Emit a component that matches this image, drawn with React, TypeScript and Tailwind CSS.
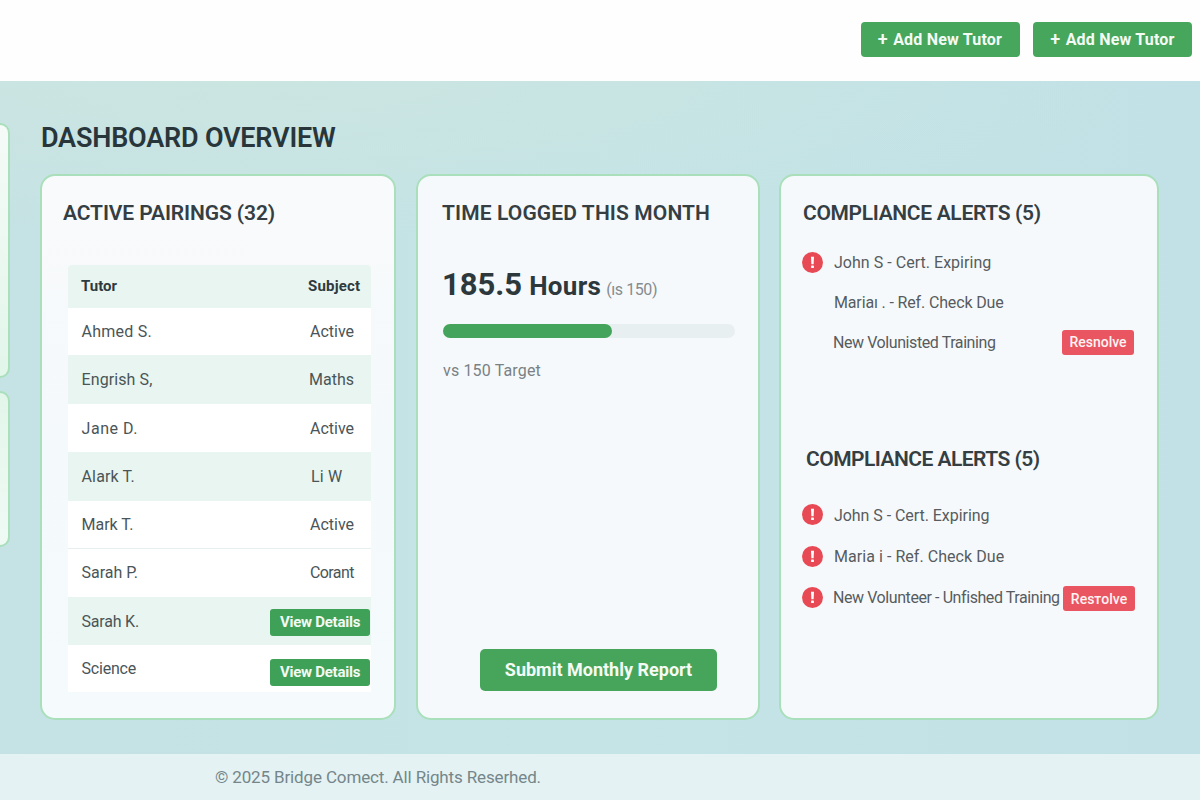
import React from 'react';
import { clsx } from 'clsx';

interface Pairing {
  tutor: string;
  subject?: string;
  rowClass: string;
  tutorClass?: string;
  subjectClass?: string;
  actionClass?: string;
}

interface Alert {
  message: string;
  flagged: boolean;
  rowClass: string;
  textClass: string;
  action?: string;
  actionClass?: string;
}

const pairings: Pairing[] = [
  { tutor: 'Ahmed S.', subject: 'Active', rowClass: 'h-[47px] bg-white', tutorClass: 'tracking-[0.25px]' },
  {
    tutor: 'Engrish S,',
    subject: 'Maths',
    rowClass: 'h-[49px] bg-[#e9f5f0]',
    tutorClass: 'tracking-[0.1px]',
    subjectClass: '-ml-px',
  },
  { tutor: 'Jane D.', subject: 'Active', rowClass: 'h-[48px] bg-white pt-px', tutorClass: 'tracking-[0.55px]' },
  {
    tutor: 'Alark T.',
    subject: 'Li W',
    rowClass: 'h-[49px] bg-[#e9f5f0]',
    tutorClass: 'tracking-[0.15px]',
    subjectClass: 'ml-px tracking-[0.2px]',
  },
  { tutor: 'Mark T.', subject: 'Active', rowClass: 'h-[48px] border-b border-[#e6eef0] bg-white' },
  { tutor: 'Sarah P.', subject: 'Corant', rowClass: 'h-[48px] bg-white', subjectClass: 'tracking-[-0.6px]' },
  { tutor: 'Sarah K.', rowClass: 'h-[48px] bg-[#e9f5f0] pt-px', tutorClass: 'tracking-[-0.2px]', actionClass: 'mt-[2px]' },
  { tutor: 'Science', rowClass: 'h-[47px] bg-white pt-px', tutorClass: 'tracking-[-0.2px]', actionClass: 'mt-[6px]' },
];

const recentAlerts: Alert[] = [
  { message: 'John S - Cert. Expiring', flagged: true, rowClass: 'h-[40px]', textClass: 'tracking-[0.03px]' },
  { message: 'Mariaı . - Ref. Check Due', flagged: false, rowClass: 'h-[40px]', textClass: 'tracking-[-0.15px]' },
  {
    message: 'New Volunisted Training',
    flagged: false,
    rowClass: 'h-[40px]',
    textClass: '-ml-px tracking-[-0.42px]',
    action: 'Resnolve',
    actionClass: 'mr-px mb-[2px]',
  },
];

const openAlerts: Alert[] = [
  { message: 'John S - Cert. Expiring', flagged: true, rowClass: 'h-[41px]', textClass: 'tracking-[-0.05px]' },
  { message: 'Maria i - Ref. Check Due', flagged: true, rowClass: 'h-[42px]', textClass: 'tracking-[0.05px]' },
  {
    message: 'New Volunteer - Unfished Training',
    flagged: true,
    rowClass: 'h-[40px]',
    textClass: '-ml-px tracking-[-0.42px]',
    action: 'Resтolve',
    actionClass: 'mt-px',
  },
];

const hoursLogged = { percent: 57.8 };

const AddTutorButton: React.FC = () => (
  <button
    type="button"
    className="h-[35px] w-[159px] rounded bg-[#46a65c] text-base font-bold tracking-[0.2px] whitespace-nowrap text-[#f4fbf5]"
  >
    <span className="mr-px text-lg leading-none font-semibold">+</span> Add New Tutor
  </button>
);

const Card: React.FC<{ className: string; children: React.ReactNode }> = ({ className, children }) => (
  <section
    className={clsx(
      'flex h-[546px] flex-col rounded-[15px] border-2 border-[#a9dfba] pt-[23.5px] whitespace-nowrap',
      className,
    )}
  >
    {children}
  </section>
);

const CardTitle: React.FC<{ className: string; children: React.ReactNode }> = ({ className, children }) => (
  <h2 className={clsx('text-[21px] leading-[26px] font-semibold text-[#343e43]', className)}>{children}</h2>
);

const AlertIcon: React.FC = () => (
  <svg viewBox="0 0 21 21" className="-ml-px size-[21px] shrink-0" aria-hidden="true">
    <circle cx="10.5" cy="10.5" r="10.5" fill="#e84a55" />
    <path d="M9 4.8h3l-.4 7.4H9.4z" fill="#fff" />
    <rect x="9.1" y="13.4" width="2.8" height="2.6" rx="0.5" fill="#fff" />
  </svg>
);

const AlertList: React.FC<{ alerts: Alert[] }> = ({ alerts }) => (
  <ul className="flex flex-col">
    {alerts.map((alert) => (
      <li key={alert.message} className={clsx('flex items-center', alert.rowClass)}>
        <span className="mb-[2px] w-[31px] shrink-0">{alert.flagged && <AlertIcon />}</span>
        <span className={clsx('text-base text-[#565c60]', alert.textClass)}>{alert.message}</span>
        {alert.action && (
          <button
            type="button"
            className={clsx(
              'ml-auto h-[25px] w-[72px] shrink-0 rounded-[3px] bg-[#e95560] text-sm font-medium text-[#fff3f3]',
              alert.actionClass,
            )}
          >
            {alert.action}
          </button>
        )}
      </li>
    ))}
  </ul>
);

const PairingsCard: React.FC = () => (
  <Card className="w-[356px] bg-linear-to-b from-[#f9fafb] via-[#f4f9fc] to-[#f5fafc] pr-[23px] pl-[21px]">
    <CardTitle className="tracking-[-0.1px]">ACTIVE PAIRINGS (32)</CardTitle>
    <div className="mt-[39.5px] ml-[5px]">
      <div className="flex h-[43px] items-center rounded-t bg-[#e9f5f0] pl-[13px] text-[15px] font-bold text-[#2f3a3e]">
        <span className="flex-1">Tutor</span>
        <span className="w-[63px] tracking-[0.2px]">Subject</span>
      </div>
      {pairings.map((row) => (
        <div key={row.tutor} className={clsx('flex items-center pl-[13.5px] text-base text-[#4a5558]', row.rowClass)}>
          <span className={clsx('flex-1', row.tutorClass)}>{row.tutor}</span>
          {row.subject ? (
            <span className="w-[61px]">
              <span className={row.subjectClass}>{row.subject}</span>
            </span>
          ) : (
            <button
              type="button"
              className={clsx(
                'mr-px h-[27px] w-[100px] rounded-[3px] bg-[#3fa158] text-[15px] font-bold tracking-[-0.25px] text-[#f2faf3]',
                row.actionClass,
              )}
            >
              View Details
            </button>
          )}
        </div>
      ))}
    </div>
  </Card>
);

const HoursCard: React.FC = () => (
  <Card className="w-[344px] bg-[#f6f9fb] pr-[23px] pb-[27px] pl-[25px]">
    <CardTitle className="-ml-px tracking-[0.12px]">TIME LOGGED THIS MONTH</CardTitle>
    <p className="mt-[41.5px] flex h-9 items-baseline leading-9 text-[#2c383b]">
      <span className="-ml-px text-[31px] font-bold">185.5</span>
      <span className="ml-[7px] text-[26px] font-bold tracking-[0.3px]">Hours</span>
      <span className="ml-[5px] text-base tracking-[-0.4px] text-[#858c90]">(ıs 150)</span>
    </p>
    <div className="mt-[21px] h-[14px] rounded-full bg-[#e8eff0]">
      <div className="h-full rounded-full bg-[#45a45c]" style={{ width: `${hoursLogged.percent}%` }} />
    </div>
    <p className="mt-[23px] text-base leading-5 tracking-[0.15px] text-[#7a8184]">vs 150 Target</p>
    <button
      type="button"
      className="mt-auto ml-[37px] h-[42px] w-[237px] rounded-[5px] bg-[#46a55b] text-lg font-bold text-[#f4fbf5]"
    >
      Submit Monthly Report
    </button>
  </Card>
);

const ComplianceCard: React.FC = () => (
  <Card className="w-[380px] bg-[#f6f9fb] pr-[22px] pl-[22px]">
    <CardTitle className="tracking-[-0.33px]">COMPLIANCE ALERTS (5)</CardTitle>
    <div className="mt-[17.5px]">
      <AlertList alerts={recentAlerts} />
    </div>
    <CardTitle className="mt-[83px] ml-[3px] tracking-[-0.53px]">COMPLIANCE ALERTS (5)</CardTitle>
    <div className="mt-[23px]">
      <AlertList alerts={openAlerts} />
    </div>
  </Card>
);

const App: React.FC = () => (
  <div className="flex h-[800px] w-[1200px] flex-col overflow-hidden bg-white font-[Roboto,sans-serif]">
    <header className="flex h-[81px] shrink-0 justify-end gap-[13.5px] bg-[#fefefe] pt-[22px] pr-2">
      <AddTutorButton />
      <AddTutorButton />
    </header>

    <div className="flex h-[673px] shrink-0 bg-[radial-gradient(ellipse_900px_160px_at_20%_0%,#cbe5e1,transparent),linear-gradient(to_right,#c5e2e4,#c4e4e6,#c1e1e6)]">
      <aside className="flex w-[10px] flex-col gap-[13px] pt-[42px]">
        <div className="h-[255px] rounded-r-[14px] border-2 border-l-0 border-[#a9dfba] bg-linear-to-b from-[#f5fbf8] to-[#e2f6ea]" />
        <div className="h-[156px] rounded-r-[14px] border-2 border-l-0 border-[#a9dfba] bg-linear-to-b from-[#e3f6ea] to-[#effaf5]" />
      </aside>

      <main className="flex flex-1 flex-col pt-[39px] pl-[30px]">
        <h1 className="ml-px text-[27px] leading-9 font-semibold tracking-[-0.2px] text-[#28363b]">
          DASHBOARD OVERVIEW
        </h1>
        <div className="mt-[18px] flex">
          <PairingsCard />
          <div className="w-5" />
          <HoursCard />
          <div className="w-[19px]" />
          <ComplianceCard />
        </div>
      </main>
    </div>

    <footer className="flex flex-1 items-center bg-[#e4f2f3] pt-px pl-[215px] text-[17px] tracking-[-0.14px] text-[#74868a]">
      © 2025 Bridge Comect. All Rights Reserhed.
    </footer>
  </div>
);

export default App;
